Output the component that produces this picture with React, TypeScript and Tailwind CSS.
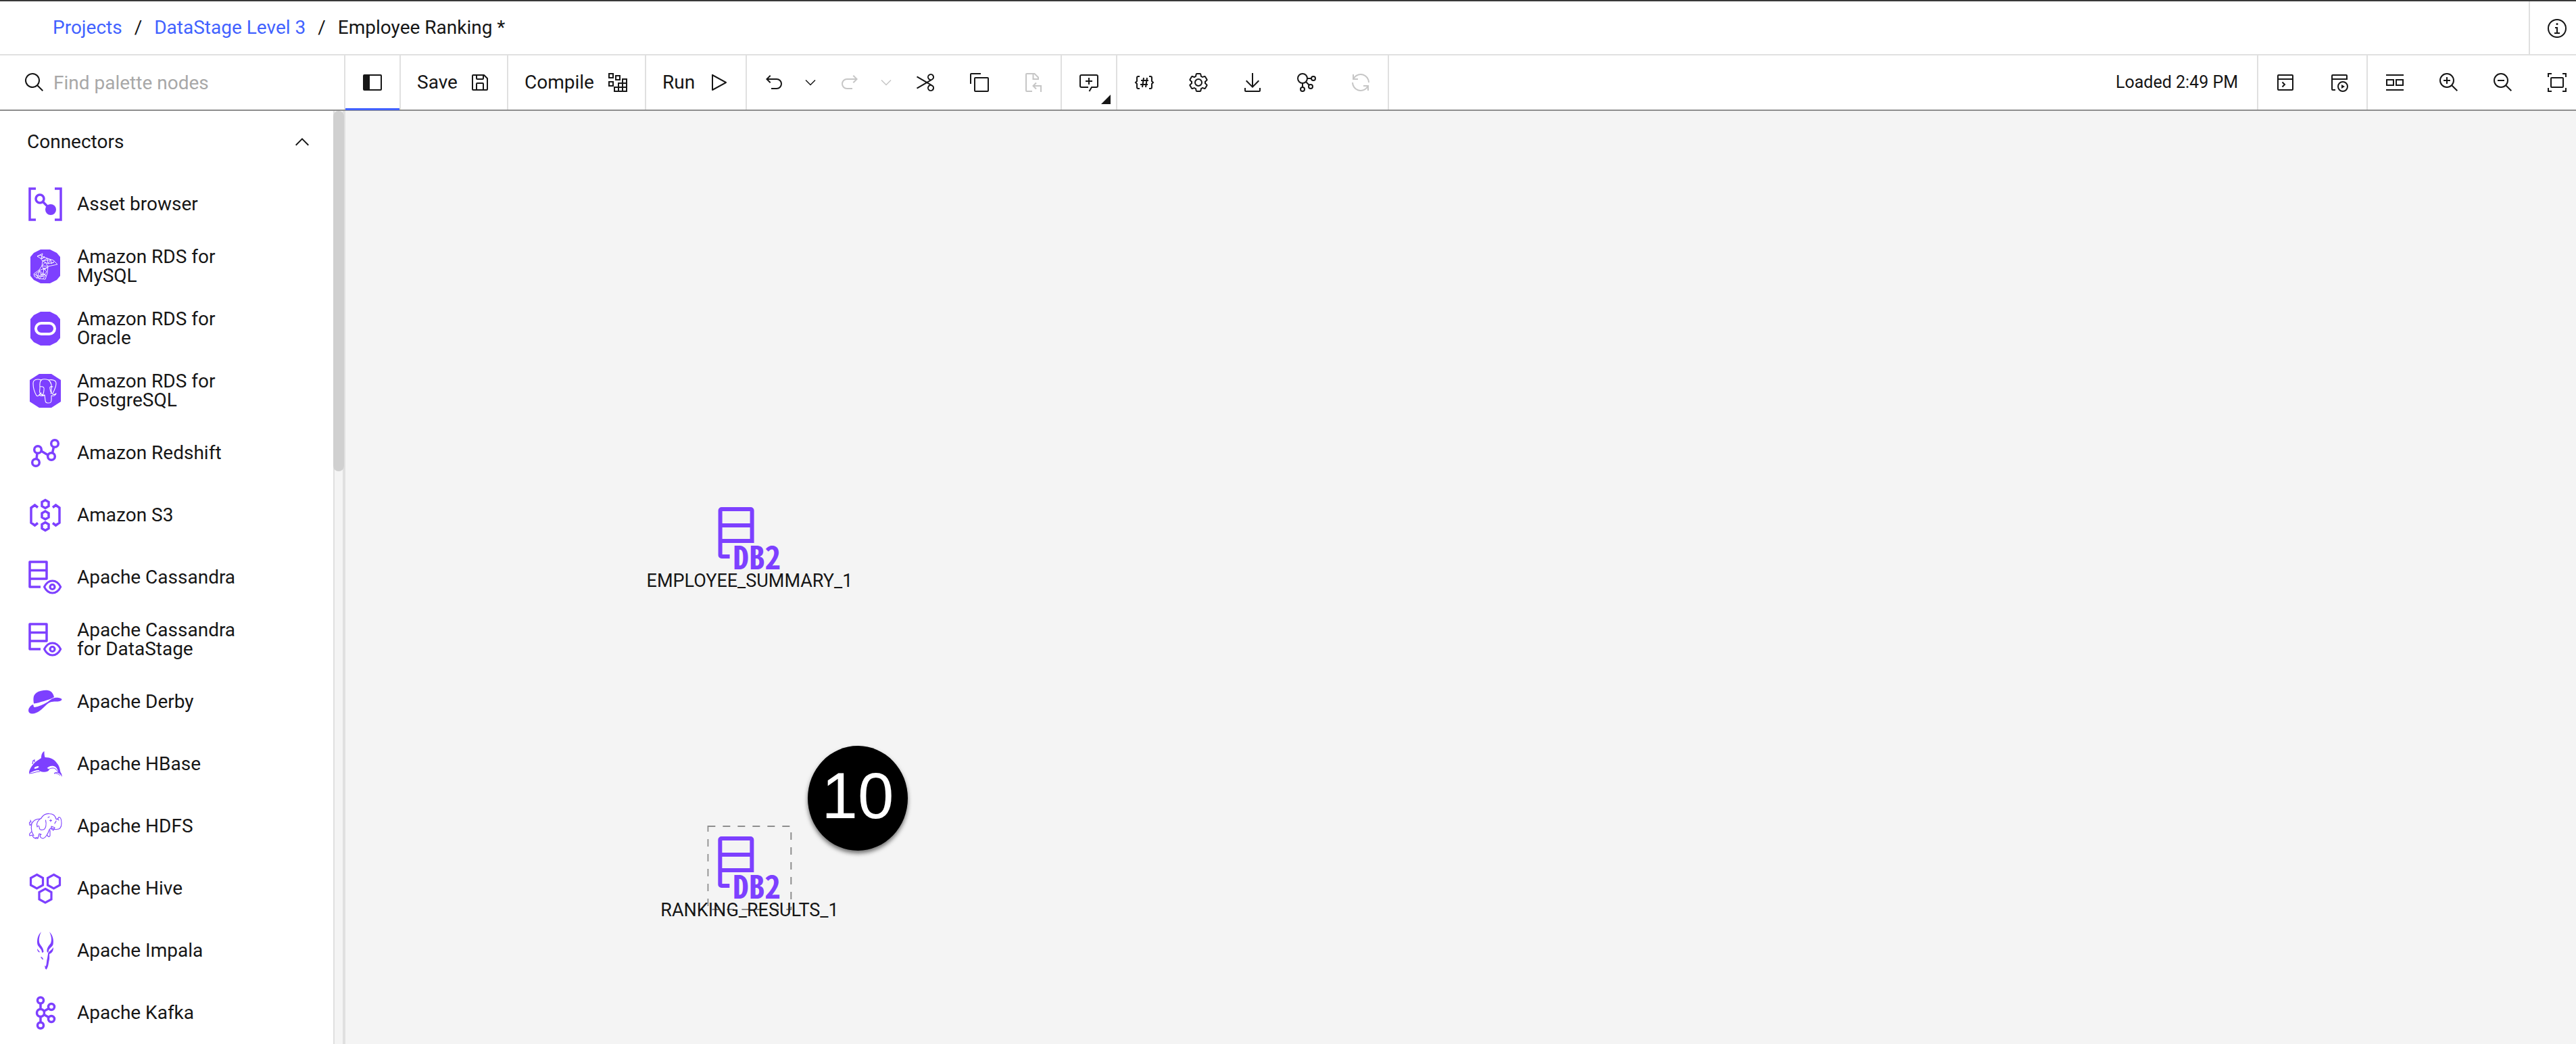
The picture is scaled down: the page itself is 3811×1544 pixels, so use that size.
import type { ReactNode } from "react";

const PURPLE = "#7d40ff";

/* ---------- toolbar icons, 32 unit grid ---------- */

function Icon({ children }: { children: ReactNode }) {
  return (
    <svg viewBox="0 0 32 32" className="size-8 shrink-0" fill="currentColor" aria-hidden="true">
      {children}
    </svg>
  );
}

function LineIcon({ children }: { children: ReactNode }) {
  return (
    <svg viewBox="0 0 32 32" className="size-8 shrink-0" fill="none" stroke="currentColor" strokeWidth="2" aria-hidden="true">
      {children}
    </svg>
  );
}

const SearchIcon = () => (
  <Icon>
    <path d="M29,27.5859l-7.5521-7.5521a11.0177,11.0177,0,1,0-1.4141,1.4141L27.5859,29ZM4,13a9,9,0,1,1,9,9A9.01,9.01,0,0,1,4,13Z" />
  </Icon>
);

const PanelIcon = () => (
  <Icon>
    <path d="M28,4H4A2,2,0,0,0,2,6V26a2,2,0,0,0,2,2H28a2,2,0,0,0,2-2V6A2,2,0,0,0,28,4Zm0,22H12V6H28Z" />
  </Icon>
);

const SaveIcon = () => (
  <Icon>
    <path d="M27.71,9.29l-5-5A1,1,0,0,0,22,4H6A2,2,0,0,0,4,6V26a2,2,0,0,0,2,2H26a2,2,0,0,0,2-2V10A1,1,0,0,0,27.71,9.29ZM12,6h8v4H12Zm8,20H12V18h8Zm2,0V18a2,2,0,0,0-2-2H12a2,2,0,0,0-2,2v8H6V6h4v4a2,2,0,0,0,2,2h8a2,2,0,0,0,2-2V6.41l4,4V26Z" />
  </Icon>
);

const CompileIcon = () => (
  <LineIcon>
    <path d="M3 3h6v6H3zM13 6h6v6h-6zM3 15h6v6H3zM23 11h6v6h-6zM17 17h6v6h-6zM23 17h6v6h-6zM11 23h6v6h-6zM17 23h6v6h-6zM23 23h6v6h-6z" />
  </LineIcon>
);

const RunIcon = () => (
  <Icon>
    <path d="M7,28a1,1,0,0,1-1-1V5a1,1,0,0,1,1.4819-.8763l20,11a1,1,0,0,1,0,1.7525l-20,11A1.0005,1.0005,0,0,1,7,28ZM8,6.6909V25.3088L24.9248,16Z" />
  </Icon>
);

const UndoIcon = () => (
  <Icon>
    <path d="M20,10H7.8149l3.5874-3.5859L10,5,4,11,10,17l1.4023-1.4146L7.8179,12H20a6,6,0,0,1,0,12H12v2h8a8,8,0,0,0,0-16Z" />
  </Icon>
);

const RedoIcon = () => (
  <Icon>
    <path d="M12,10H24.1851L20.5977,6.4141,22,5,28,11,22,17l-1.4023-1.4146L24.1821,12H12a6,6,0,0,0,0,12h8v2H12a8,8,0,0,1,0-16Z" />
  </Icon>
);

function Chevron({ up = false, small = false }: { up?: boolean; small?: boolean }) {
  return (
    <svg viewBox="0 0 16 16" className={small ? "size-6 shrink-0" : "size-8 shrink-0"} fill="currentColor" aria-hidden="true">
      {up ? (
        <path d="M8 5 13 10 12.3 10.7 8 6.4 3.7 10.7 3 10z" />
      ) : (
        <path d="M8 11 3 6 3.7 5.3 8 9.6 12.3 5.3 13 6z" />
      )}
    </svg>
  );
}

const CutIcon = () => (
  <Icon>
    <path d="M26.5,19.63,20.24,16l6.26-3.63a5,5,0,0,0-1.21-9.2A5.19,5.19,0,0,0,24,3a5,5,0,0,0-4.33,7.53,5,5,0,0,0,2.39,2.1l-3.82,2.21L4,6.6,3,8.34,16.24,16,3,23.68l1,1.74,14.24-8.26,3.82,2.21a5,5,0,0,0-2.39,2.1A5,5,0,0,0,24,29a5.19,5.19,0,0,0,1.29-.17,5,5,0,0,0,1.21-9.2ZM21.4,9.53a3,3,0,0,1,1.1-4.12,3,3,0,0,1,4.1,1.11,3,3,0,0,1-1.1,4.11h0A3,3,0,0,1,21.4,9.53Zm5.2,16a3,3,0,0,1-4.1,1.11,3,3,0,0,1-1.1-4.12,3,3,0,0,1,4.1-1.1h0A3,3,0,0,1,26.6,25.48Z" />
  </Icon>
);

const CopyIcon = () => (
  <Icon>
    <path d="M28,10V28H10V10H28m0-2H10a2,2,0,0,0-2,2V28a2,2,0,0,0,2,2H28a2,2,0,0,0,2-2V10a2,2,0,0,0-2-2Z" />
    <path d="M4,18H2V4A2,2,0,0,1,4,2H18V4H4Z" />
  </Icon>
);

const PasteIcon = () => (
  <LineIcon>
    <path d="M14 29H6a1 1 0 0 1-1-1V4a1 1 0 0 1 1-1h11.5L23 8.5V12M15.500 3v8H23" />
    <path d="M20 16.500 15.500 21l4.500 4.500M16 21h11v9" />
  </LineIcon>
);

const CommentIcon = () => (
  <LineIcon>
    <path d="M15 23H5a2 2 0 0 1-2-2V7a2 2 0 0 1 2-2h22a2 2 0 0 1 2 2v14a2 2 0 0 1-2 2h-7l-3.500 6" />
    <path d="M16 9v10M11 14h10" />
  </LineIcon>
);

const ParameterIcon = () => (
  <LineIcon>
    <path d="M9 7H7a2 2 0 0 0-2 2v5l-2 2 2 2v5a2 2 0 0 0 2 2h2M23 7h2a2 2 0 0 1 2 2v5l2 2-2 2v5a2 2 0 0 1-2 2h-2" />
    <path d="M15 9l-2 14M20 9l-2 14M11 13h11M10 19h11" />
  </LineIcon>
);

const SettingsIcon = () => (
  <Icon>
    <path d="M27,16.76c0-.25,0-.5,0-.76s0-.51,0-.77l1.92-1.68A2,2,0,0,0,29.3,11L26.94,7a2,2,0,0,0-1.73-1,2,2,0,0,0-.64.1l-2.43.82a11.35,11.35,0,0,0-1.31-.75l-.51-2.52a2,2,0,0,0-2-1.61H13.64a2,2,0,0,0-2,1.61l-.51,2.52a11.48,11.48,0,0,0-1.32.75L7.43,6.06A2,2,0,0,0,6.79,6,2,2,0,0,0,5.06,7L2.7,11a2,2,0,0,0,.41,2.51L5,15.24c0,.25,0,.5,0,.76s0,.51,0,.77L3.11,18.45A2,2,0,0,0,2.7,21L5.06,25a2,2,0,0,0,1.73,1,2,2,0,0,0,.64-.1l2.43-.82a11.35,11.35,0,0,0,1.31.75l.51,2.52a2,2,0,0,0,2,1.61h4.72a2,2,0,0,0,2-1.61l.51-2.52a11.48,11.48,0,0,0,1.32-.75l2.42.82a2,2,0,0,0,.64.1,2,2,0,0,0,1.73-1L29.3,21a2,2,0,0,0-.41-2.51ZM25.21,24l-3.43-1.16a8.86,8.86,0,0,1-2.71,1.57L18.36,28H13.64l-.71-3.55a9.36,9.36,0,0,1-2.7-1.57L6.79,24,4.43,20l2.72-2.4a8.9,8.9,0,0,1,0-3.13L4.43,12,6.79,8l3.43,1.16a8.86,8.86,0,0,1,2.71-1.57L13.64,4h4.72l.71,3.55a9.36,9.36,0,0,1,2.7,1.57L25.21,8,27.57,12l-2.72,2.4a8.9,8.9,0,0,1,0,3.13L27.57,20Z" />
    <path d="M16,22a6,6,0,1,1,6-6A5.94,5.94,0,0,1,16,22Zm0-10a3.91,3.91,0,0,0-4,4,3.91,3.91,0,0,0,4,4,3.91,3.91,0,0,0,4-4A3.91,3.91,0,0,0,16,12Z" />
  </Icon>
);

const DownloadIcon = () => (
  <Icon>
    <path d="M26,24v4H6V24H4v4a2,2,0,0,0,2,2H26a2,2,0,0,0,2-2V24Z" />
    <path d="M26 14 24.59 12.59 17 20.17 17 2 15 2 15 20.17 7.41 12.59 6 14 16 24 26 14Z" />
  </Icon>
);

const FlowIcon = () => (
  <LineIcon>
    <circle cx="10" cy="10" r="7" />
    <circle cx="26" cy="10" r="3" />
    <circle cx="10" cy="26" r="3" />
    <circle cx="22" cy="22" r="3" />
    <path d="M17 10h6M10 17v6M15 15l5 5" />
  </LineIcon>
);

const RefreshIcon = () => (
  <Icon>
    <path d="M12,10H6.78A11,11,0,0,1,27,16h2A13,13,0,0,0,6,7.68V4H4v8h8Z" />
    <path d="M20,22h5.22A11,11,0,0,1,5,16H3a13,13,0,0,0,23,8.32V28h2V20H20Z" />
  </Icon>
);

const ConsoleIcon = () => (
  <LineIcon>
    <rect x="5" y="5" width="22" height="22" rx="1" />
    <path d="M5 11h22M11.500 15.500 15 19l-3.500 3.500" />
  </LineIcon>
);

const RunLogIcon = () => (
  <LineIcon>
    <path d="M10 27H6a1 1 0 0 1-1-1V6a1 1 0 0 1 1-1h20a1 1 0 0 1 1 1v5H5" />
    <circle cx="21" cy="22" r="7" />
    <path d="M19 19v6l5-3z" fill="currentColor" stroke="none" />
  </LineIcon>
);

const FitRowIcon = () => (
  <LineIcon>
    <path d="M3 5h26M3 27h26M4 12h10v8H4zM18 12h10v8H18z" />
  </LineIcon>
);

const ZoomInIcon = () => (
  <LineIcon>
    <circle cx="13" cy="13" r="10" />
    <path d="M20.500 20.500l7.800 7.800M13 8v10M8 13h10" />
  </LineIcon>
);

const ZoomOutIcon = () => (
  <LineIcon>
    <circle cx="13" cy="13" r="10" />
    <path d="M20.500 20.500l7.800 7.800M8 13h10" />
  </LineIcon>
);

const FitIcon = () => (
  <LineIcon>
    <path d="M3 8V3h5M24 3h5v5M29 24v5h-5M8 29H3v-5" />
    <rect x="7" y="9" width="18" height="14" rx="1" />
  </LineIcon>
);

const InfoIcon = () => (
  <Icon>
    <path d="M17 22 17 14 13 14 13 16 15 16 15 22 12 22 12 24 20 24 20 22 17 22z" />
    <path d="M16,8a1.500,1.500,0,1,0,1.500,1.500A1.500,1.500,0,0,0,16,8Z" />
    <path d="M16,30A14,14,0,1,1,30,16,14,14,0,0,1,16,30ZM16,4A12,12,0,1,0,28,16,12,12,0,0,0,16,4Z" />
  </Icon>
);

/* ---------- palette icons, 50 unit grid ---------- */

function Glyph({ children }: { children: ReactNode }) {
  return (
    <svg
      viewBox="0 0 50 50"
      className="size-[50px] shrink-0 overflow-visible"
      fill="none"
      stroke={PURPLE}
      strokeWidth="3.500"
      aria-hidden="true"
    >
      {children}
    </svg>
  );
}

const OCTAGON = "M18 0h14l10 5 5 6v28l-5 6-10 5H18L8 45l-5-6V11l5-6z";

const AssetGlyph = () => (
  <Glyph>
    <path d="M11 2H2v46h9M39 2h9v46h-9M21 21l8 8" />
    <circle cx="17" cy="17" r="6" />
    <circle cx="33" cy="33" r="8" fill={PURPLE} stroke="none" />
  </Glyph>
);

const MySqlGlyph = () => (
  <Glyph>
    <path d={OCTAGON} fill={PURPLE} stroke="none" />
    <g stroke="#fff" strokeWidth="0.9" strokeLinejoin="round">
      <path d="M21 6l-8 4 5 3 3 4-1 7-4 6-8 6 1 4 7 3 9 1 3-9 1-10 14-3-6-6-9-3-8-3z" />
      <path d="M13 10l6-2 1 6 4-4M18 13l6-1M21 17l7-4 1 8-8-4 12-2-4 6 9-2M20 24l5-5 4 6-9-1 3 6 6-4-13 5 6 5 1-9 4 6-6 7-5-8-5 4 4 6 4-6 6 2M9 37l5 2 2-8M12 43l2-4 9 1M16 44l6-8 4 2-5 6M33 15l1 6 5-4" />
    </g>
  </Glyph>
);

const OracleGlyph = () => (
  <Glyph>
    <path d={OCTAGON} fill={PURPLE} stroke="none" />
    <rect x="11" y="17" width="28" height="16" rx="8" stroke="#fff" strokeWidth="4" />
  </Glyph>
);

const PostgresGlyph = () => (
  <Glyph>
    <path d="M16 0h18l14 9v32l-14 9H16L2 41V9z" fill={PURPLE} stroke="none" />
    <g stroke="#fff" strokeWidth="1.100" strokeLinejoin="round" strokeLinecap="round">
      <path d="M19 9c-6-2-12-1-12 5 0 5 2 13 5 18 1 1 3 1 4-1l3-3" />
      <path d="M19 9c3-2 8-1 11 0 5-1 11 0 11 5 0 5-3 11-5 15-1 2 3 2 5 0-1 3-4 4-7 3v6c0 5-2 5-5 5s-4-2-4-4l-1-8c-2 2-6 2-8 0" />
      <path d="M19 9c-3 3-2 8-2 12 0 3-1 4 0 7l4 4c1-3 2-5 2-8 1-4-1-6-6-5M30 9c4 4 5 9 4 14 0 3 1 4-1 6M36 19c-3-1-5 0-4 3 0 4 1 5 3 7M22 31l-4-1" />
    </g>
  </Glyph>
);

const RedshiftGlyph = () => (
  <Glyph>
    <circle cx="11" cy="39" r="5.300" />
    <circle cx="14" cy="20" r="5.300" />
    <circle cx="34" cy="30" r="5.300" />
    <circle cx="39" cy="11" r="5.300" />
    <path d="M12 34l1-9M19 22l10 6M35.500 25l2-9" />
  </Glyph>
);

const S3Glyph = () => (
  <Glyph>
    <path d="M25 2.500l5 3v6l-5 3-5-3v-6zM25 19l5 3v6l-5 3-5-3v-6zM25 35.500l5 3v6l-5 3-5-3v-6z" />
    <path d="M14 13.500L9.500 10 4 14v22l5.500 4 4.500-3.500M36 13.500l4.500-3.500 5.500 4v22l-5.500 4-4.500-3.500" />
  </Glyph>
);

const CassandraGlyph = () => (
  <Glyph>
    <path d="M18 39H2V2h25v25H2M2 14.500h25" strokeLinejoin="round" />
    <path d="M23.500 39c3-6 7-9 12.100-9s9.100 3 12.100 9c-3 6-7 9-12.100 9s-9.100-3-12.100-9z" strokeWidth="3" strokeLinejoin="round" />
    <circle cx="35.500" cy="39" r="3.500" strokeWidth="3.200" />
  </Glyph>
);

const DerbyGlyph = () => (
  <Glyph>
    <g fill={PURPLE} stroke="none">
      <path d="M8 27.500C7 20 7 15 12 11.500 17 8 27 7 31 8.500c4 1.500 6 5 7 9.500-4 2.500-9 4-15 6-6 1.500-10 3-15 3.500z" />
      <path d="M7 29c1 1 0 3 2 4 6-1 13-4 18-7 5-3 7-6 12-7 5-.7 10 .5 10.500 2.500-.5 2.500-5 3-9 3-6 0-9 .5-14 5-6 6-13 13-21 13-6 0-6.500-6-4-9C3 31 5 29.500 7 29z" />
    </g>
  </Glyph>
);

const HBaseGlyph = () => (
  <Glyph>
    <g fill={PURPLE} stroke="none">
      <path d="M1 38.500c0-5 3-9 6-13 3-4 7-6 12-9.500 0-4 1-8 4.500-10 0 3 0 6 1 9 8 0 14 3 18 9 4 5 4 9 5 13 1.500 2 2.500 4 2 7-1-3-3-4.500-5-6-1-5-3-9-7-10-5-1-8 1-11 4-4 3-8 2-11 2-5 0-9 2-14.500 4.500z" />
      <ellipse cx="23" cy="33.500" rx="7.500" ry="3.300" />
    </g>
    <ellipse cx="12" cy="30" rx="3.500" ry="1.400" fill="#fff" stroke="none" transform="rotate(-20 12 30)" />
    <path d="M1 39c6 0 10-3 16-3M28 34c4-3 9-4 12-2l5 6c-3-1-6-1-7 1 4-1 7 1 9 3" strokeWidth="1" />
    <path d="M6 25l1-5 2-1v3" strokeWidth="1.200" />
  </Glyph>
);

const HdfsGlyph = () => (
  <Glyph>
    <g strokeWidth="1.100" strokeLinejoin="round" strokeLinecap="round">
      <path d="M19 13c3-5 8-7 12-6.500 5 0 9 3 10 8 2 1 3-1 4-3 3 0 4 4 4 9 0 6-3 9-7 9-3 1-5-1-8-2" />
      <path d="M19 13c-5 3-8 8-6 13 1-2 3-2 3 0 0 4 2 5 6 4 4-1 5-8 3.500-14" />
      <path d="M17 14c-6 0-10 3-12 7-1 4-1 8 0 12-3 2-4 4-3 6l4-1c0 3 2 5 8 5l2-7 3 1c-3 1-2 5 2 6 4 0 8-7 10-13l2-2M28 38c1 3 3 3 4 1v-8M10 43c1-2 3-2 4 0M5 33l3 6" />
      <path d="M4 19c-3-1-3 1-2 4 1 1 2 0 2-2M3 16l1 3M33 15v3M31.500 16.500h3M29 12l2-1M41 17c0 2-2 2-2 4M34 25l5 2-2 4-3-2zM42 14c1 1 2 0 3 2" />
    </g>
  </Glyph>
);

const HiveGlyph = () => (
  <Glyph>
    <path d="M12.500 4.500l9 5v10.500l-9 5-9-5V9.500zM37.500 4.500l9 5v10.500l-9 5-9-5V9.500zM25 25.500l9 5V41l-9 5-9-5V30.500z" strokeWidth="3.200" />
  </Glyph>
);

const ImpalaGlyph = () => (
  <Glyph>
    <g fill={PURPLE} stroke="none">
      <path d="M19-3c-5 5-7 12-5.500 19 1.500 4 7 7 6.500 12l2.500-1c0-6-4-9-6-13C15 9 16 3 19-3z" />
      <path d="M31-3c5 5 7 12 5.500 19-1.500 4-7 6-6.500 10l-2 2c-2-6 2-10 5-14C35 9 34 3 31-3z" />
      <path d="M37 20c0 6-2 8-6 10 0 3 .5 6-.5 10-1 5-1 9-4 13l-2-2c3-5 2-10 3.500-15l1-6c0-4 4-4 8-10z" />
      <path d="M13 22l4 5-1 .5c-2-1-3-3-3-5.500zM18 34c2 0 4 2 4 4.500-2-1-3-2-4-4.500zM24 47l3 2-2 2z" />
    </g>
  </Glyph>
);

const KafkaGlyph = () => (
  <Glyph>
    <circle cx="18" cy="6.500" r="4.500" />
    <circle cx="18" cy="25" r="5.500" />
    <circle cx="18" cy="43.500" r="4.500" />
    <circle cx="34" cy="16" r="4.500" />
    <circle cx="34" cy="34" r="4.500" />
    <path d="M18 11v8.500M18 30.500V39M23 22.500l7-4M23 27.500l7 4" />
  </Glyph>
);

const CONNECTORS: { name: string; glyph: ReactNode }[] = [
  { name: "Asset browser", glyph: <AssetGlyph /> },
  { name: "Amazon RDS for MySQL", glyph: <MySqlGlyph /> },
  { name: "Amazon RDS for Oracle", glyph: <OracleGlyph /> },
  { name: "Amazon RDS for PostgreSQL", glyph: <PostgresGlyph /> },
  { name: "Amazon Redshift", glyph: <RedshiftGlyph /> },
  { name: "Amazon S3", glyph: <S3Glyph /> },
  { name: "Apache Cassandra", glyph: <CassandraGlyph /> },
  { name: "Apache Cassandra for DataStage", glyph: <CassandraGlyph /> },
  { name: "Apache Derby", glyph: <DerbyGlyph /> },
  { name: "Apache HBase", glyph: <HBaseGlyph /> },
  { name: "Apache HDFS", glyph: <HdfsGlyph /> },
  { name: "Apache Hive", glyph: <HiveGlyph /> },
  { name: "Apache Impala", glyph: <ImpalaGlyph /> },
  { name: "Apache Kafka", glyph: <KafkaGlyph /> },
];

/* ---------- page parts ---------- */

function ToolButton({ label, disabled = false, children }: { label: string; disabled?: boolean; children: ReactNode }) {
  return (
    <button
      type="button"
      aria-label={label}
      disabled={disabled}
      className="flex h-20 w-20 shrink-0 items-center justify-center disabled:text-[#c6c6c6]"
    >
      {children}
    </button>
  );
}

function MenuButton({ label, disabled = false }: { label: string; disabled?: boolean }) {
  return (
    <button
      type="button"
      aria-label={label}
      disabled={disabled}
      className="flex h-20 w-8 shrink-0 items-center pl-0.5 disabled:text-[#c6c6c6]"
    >
      <Chevron small />
    </button>
  );
}

function Group({ children }: { children: ReactNode }) {
  return <div className="flex shrink-0 border-l-2 border-[#e0e0e0]">{children}</div>;
}

function Breadcrumbs() {
  return (
    <header className="flex h-20 shrink-0 justify-between border-b-2 border-[#e0e0e0]">
      <nav aria-label="Breadcrumb" className="flex items-center pl-[78px]">
        <ol className="flex items-center gap-[18px]">
          <li>
            <a href="#projects" className="text-[#4262ff]">Projects</a>
          </li>
          <li aria-hidden="true">/</li>
          <li>
            <a href="#datastage" className="text-[#4262ff]">DataStage Level 3</a>
          </li>
          <li aria-hidden="true">/</li>
          <li aria-current="page">Employee Ranking *</li>
        </ol>
      </nav>
      <div className="-mr-3 flex border-l-2 border-[#e0e0e0]">
        <ToolButton label="Information"><InfoIcon /></ToolButton>
      </div>
    </header>
  );
}

function Toolbar() {
  return (
    <div role="toolbar" aria-label="Flow editor" className="flex shrink-0 border-b-2 border-[#8d8d8d]">
      <div className="flex w-[509px] shrink-0 items-center gap-3 pl-[35px]">
        <label htmlFor="palette-search"><SearchIcon /></label>
        <input
          id="palette-search"
          type="text"
          aria-label="Find palette nodes"
          placeholder="Find palette nodes"
          className="min-w-0 flex-1 bg-transparent outline-none placeholder:text-[#a8a8a8]"
        />
      </div>
      <Group>
        <div className="-mb-px border-b-3 border-[#4262ff]">
          <div className="-mb-0.5"><ToolButton label="Toggle palette"><PanelIcon /></ToolButton></div>
        </div>
      </Group>
      <Group>
        <button type="button" className="flex w-[157px] items-center justify-between px-6">Save<SaveIcon /></button>
      </Group>
      <Group>
        <button type="button" className="flex w-[202px] items-center justify-between px-6">Compile<CompileIcon /></button>
      </Group>
      <Group>
        <button type="button" className="flex w-[147px] items-center justify-between px-6">Run<RunIcon /></button>
      </Group>
      <Group>
        <ToolButton label="Undo"><UndoIcon /></ToolButton>
        <MenuButton label="Undo history" />
        <ToolButton label="Redo" disabled><RedoIcon /></ToolButton>
        <MenuButton label="Redo history" disabled />
        <ToolButton label="Cut"><CutIcon /></ToolButton>
        <ToolButton label="Copy"><CopyIcon /></ToolButton>
        <ToolButton label="Paste" disabled><PasteIcon /></ToolButton>
      </Group>
      <Group>
        <div className="relative">
          <ToolButton label="Add comment"><CommentIcon /></ToolButton>
          <svg viewBox="0 0 14 14" className="pointer-events-none absolute right-2 bottom-2 size-3.5" aria-hidden="true">
            <path d="M14 0v14H0z" fill="#161616" />
          </svg>
        </div>
      </Group>
      <Group>
        <ToolButton label="Parameters"><ParameterIcon /></ToolButton>
        <ToolButton label="Settings"><SettingsIcon /></ToolButton>
        <ToolButton label="Download"><DownloadIcon /></ToolButton>
        <ToolButton label="Lineage"><FlowIcon /></ToolButton>
        <ToolButton label="Refresh" disabled><RefreshIcon /></ToolButton>
      </Group>
      <div className="flex flex-1 items-center justify-end border-l-2 border-[#e0e0e0] pr-7 text-[25px]">Loaded 2:49 PM</div>
      <Group>
        <ToolButton label="Console"><ConsoleIcon /></ToolButton>
        <ToolButton label="Run log"><RunLogIcon /></ToolButton>
      </Group>
      <div className="-mr-3 flex shrink-0 border-l-2 border-[#e0e0e0]">
        <ToolButton label="Arrange"><FitRowIcon /></ToolButton>
        <ToolButton label="Zoom in"><ZoomInIcon /></ToolButton>
        <ToolButton label="Zoom out"><ZoomOutIcon /></ToolButton>
        <ToolButton label="Zoom to fit"><FitIcon /></ToolButton>
      </div>
    </div>
  );
}

function Palette() {
  return (
    <aside aria-label="Palette" className="flex w-[511px] shrink-0 overflow-hidden border-r-2 border-[#e0e0e0]">
      <div className="flex-1">
        <button type="button" aria-expanded="true" className="flex h-[92px] w-full items-center justify-between pr-[30px] pl-10">
          Connectors
          <Chevron up />
        </button>
        <ul>
          {CONNECTORS.map((item) => (
            <li key={item.name} className="flex h-[92px] items-center gap-[22px] pl-[42px]">
              {item.glyph}
              <span className="w-[244px]">{item.name}</span>
            </li>
          ))}
        </ul>
      </div>
      <div className="w-4 border-x-2 border-[#e0e0e0] bg-[#f4f4f4]">
        <div className="-mx-0.5 h-[533px] rounded-full bg-[#d0d0d0]" />
      </div>
    </aside>
  );
}

function Db2Mark() {
  return (
    <svg viewBox="0 0 93 93" className="size-[93px] overflow-visible" aria-hidden="true">
      <path
        d="M17 73H5a2 2 0 0 1-2-2V5a2 2 0 0 1 2-2h43a2 2 0 0 1 2 2v45M53 50H3M3 27h47"
        fill="none"
        stroke={PURPLE}
        strokeWidth="6"
      />
      <text x="22" y="92" fill={PURPLE} className="font-['Noto_Sans_Mono_CJK_SC','Roboto',sans-serif] text-[47px] font-bold">
        DB2
      </text>
    </svg>
  );
}

function FlowNode({ name, place, selected = false }: { name: string; place: string; selected?: boolean }) {
  return (
    <div className={`absolute flex -translate-x-1/2 flex-col items-center gap-0.5 ${place}`}>
      <div className="relative">
        <Db2Mark />
        {selected && (
          <svg viewBox="0 0 126 126" className="absolute -top-4 -left-4 size-[126px]" aria-hidden="true">
            <rect x="1" y="1" width="123" height="123" fill="none" stroke="#8d8d8d" strokeWidth="2" strokeDasharray="11 11" />
          </svg>
        )}
      </div>
      <span className="relative text-[27px]">{name}</span>
    </div>
  );
}

function Canvas() {
  return (
    <main className="relative flex-1 overflow-hidden bg-[#f4f4f4]">
      <FlowNode name="EMPLOYEE_SUMMARY_1" place="left-[598px] top-[586px]" />
      <FlowNode name="RANKING_RESULTS_1" place="left-[598px] top-[1073px]" selected />
      <div className="absolute top-[939px] left-[684px] flex h-[155px] w-[148px] items-center justify-center rounded-[50%] bg-black pb-2 font-['Liberation_Sans',sans-serif] text-[96px] text-white shadow-[0_4px_6px_rgba(0,0,0,0.55)]">
        10
      </div>
    </main>
  );
}

export default function App() {
  return (
    <div className="flex h-screen flex-col overflow-hidden border-t-2 border-[#393939] bg-white font-['Roboto',sans-serif] text-[28px] leading-[28px] text-[#161616]">
      <Breadcrumbs />
      <Toolbar />
      <div className="flex min-h-0 flex-1">
        <Palette />
        <Canvas />
      </div>
    </div>
  );
}
